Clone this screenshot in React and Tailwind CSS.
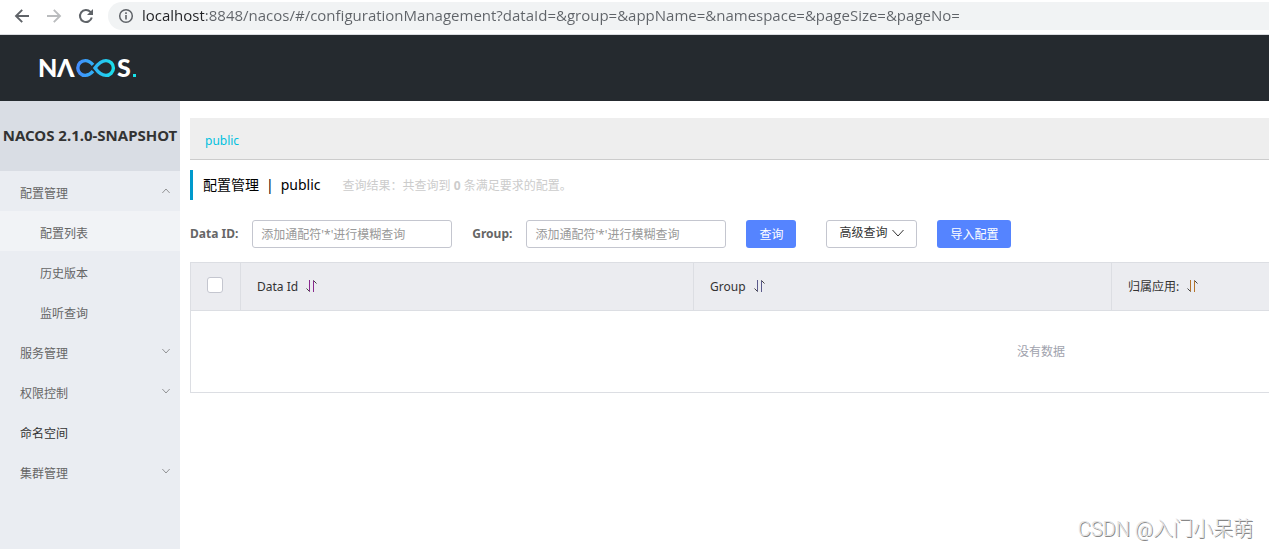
import React from 'react';

const URL_TEXT =
  'localhost:8848/nacos/#/configurationManagement?dataId=&group=&appName=&namespace=&pageSize=&pageNo=';

const menu = [
  { name: '配置管理', open: true, children: ['配置列表', '历史版本', '监听查询'] },
  { name: '服务管理', open: false, children: [] },
  { name: '权限控制', open: false, children: [] },
  { name: '命名空间' },
  { name: '集群管理', open: false, children: [] },
];

const Chevron = ({ up = false, className = '' }) => (
  <svg viewBox="0 0 12 8" fill="none" stroke="currentColor" className={className} aria-hidden="true">
    <path d={up ? 'M.5 7L6 1l5.5 6' : 'M.5 1L6 7l5.5-6'} />
  </svg>
);

const SortIcon = ({ className }) => (
  <svg width="11" height="14" viewBox="0 0 11 14" fill="none" stroke="currentColor" className={`mb-0.5 ${className}`} aria-hidden="true">
    <path d="M3.5 1v11.5" />
    <path d="M7.5 13V1.5" />
    <path d="M3.5 12.5l-3-3M7.5 1.5l3 3" stroke="#444" />
  </svg>
);

const BrowserBar = () => (
  <div className="flex h-[35px] items-start border-b border-[#dadce0] bg-white text-[#5f6368]">
    <div className="flex h-8 shrink-0 items-center gap-4 px-3.5">
      <button type="button" aria-label="Back">
        <svg width="16" height="16" viewBox="0 0 16 16" fill="none" stroke="currentColor" strokeWidth="1.9">
          <path d="M15 8H2.5M8.2 1.8L2 8l6.2 6.2" />
        </svg>
      </button>
      <button type="button" aria-label="Forward" className="text-[#babcbe]">
        <svg width="16" height="16" viewBox="0 0 16 16" fill="none" stroke="currentColor" strokeWidth="1.9">
          <path d="M1 8h12.5M7.8 1.8L14 8l-6.2 6.2" />
        </svg>
      </button>
      <button type="button" aria-label="Reload">
        <svg width="16" height="16" viewBox="0 0 16 16" fill="none" stroke="currentColor" strokeWidth="2">
          <path d="M13.8 9.6A6 6 0 1 1 12.4 3.9L14 5.6" />
          <path d="M15 1v6H9z" fill="currentColor" stroke="none" />
        </svg>
      </button>
    </div>
    <div className="mt-0.5 flex h-7 min-w-0 flex-1 items-center gap-2 rounded-l-full bg-[#f1f3f4] pl-2.5">
      <svg width="16" height="16" viewBox="0 0 16 16" fill="none" stroke="currentColor" className="shrink-0" aria-hidden="true">
        <circle cx="8" cy="8" r="6.3" strokeWidth="1.5" />
        <path d="M8 7v4.5M8 4.3v1.6" strokeWidth="1.6" />
      </svg>
      <input
        type="text"
        aria-label="Address"
        defaultValue={URL_TEXT}
        className="h-7 min-w-0 flex-1 bg-[linear-gradient(90deg,#202124_62px,#5f6368_62px)] bg-clip-text pb-0.5 font-['Open_Sans',sans-serif] text-[15px] text-transparent outline-none"
      />
    </div>
  </div>
);

const Logo = () => (
  <svg width="104" height="36" viewBox="-4 -6 104 36" role="img" aria-label="NACOS.">
    <defs>
      <linearGradient id="loop" x1="36" y1="0" x2="76" y2="0" gradientUnits="userSpaceOnUse">
        <stop offset="0" stopColor="#4589ff" />
        <stop offset="1" stopColor="#17e3ea" />
      </linearGradient>
    </defs>
    <g fill="#fff" fontFamily="Lato, sans-serif" fontWeight="900" fontSize="25">
      <text x="-2" y="21">N</text>
      <text x="17" y="21">Λ</text>
      <text x="77" y="21">S</text>
    </g>
    <path
      d="M53 15.2C50.5 18.2 48 19.4 45.2 19.4a7.4 7.4 0 0 1 0-14.8c2.8 0 5.3 1.2 7.8 4.2M55 12c4-5.5 6.8-7.4 11-7.4a7.4 7.4 0 0 1 0 14.8c-4.2 0-7-1.9-11-7.4z"
      fill="none"
      stroke="url(#loop)"
      strokeWidth="3.4"
    />
    <rect x="93" y="18" width="3" height="3" fill="#17e3ea" />
  </svg>
);

const Sidebar = () => (
  <nav className="w-[180px] shrink-0 bg-[#eaedf2] text-xs text-[#666]">
    <h1 className="flex h-[70px] items-center justify-center whitespace-nowrap bg-[#d9dde4] pb-0.5 text-[15px] font-bold text-[#333]">
      NACOS 2.1.0-SNAPSHOT
    </h1>
    <ul>
      {menu.map((item) => (
        <li key={item.name}>
          <a
            href="#"
            className={`flex h-10 items-center justify-between pl-5 pr-2.5 pt-1.5 ${item.children ? '' : 'text-[#333]'}`}
          >
            {item.name}
            {item.children && <Chevron up={item.open} className="mb-1.5 h-2 w-2 text-[#666]" />}
          </a>
          {item.open && (
            <ul>
              {item.children.map((child, i) => (
                <li key={child}>
                  <a href="#" className={`flex h-10 items-center pl-10 pt-1.5 ${i === 0 ? 'bg-[#f1f3f6]' : ''}`}>
                    {child}
                  </a>
                </li>
              ))}
            </ul>
          )}
        </li>
      ))}
    </ul>
  </nav>
);

const SearchField = ({ id, label }) => (
  <div className="mr-5 flex items-center gap-3.5">
    <label htmlFor={id} className="font-bold text-[#666]">
      {label}
    </label>
    <input
      id={id}
      type="text"
      placeholder="添加通配符'*'进行模糊查询"
      className="h-7 w-[200px] rounded-[3px] border border-[#c4c6cf] px-2 placeholder:text-[#999]"
    />
  </div>
);

const HeadCell = ({ title, iconClass, className = '' }) => (
  <th className={`border border-[#dcdee3] px-4 text-left font-normal ${className}`}>
    <button type="button" className="flex items-center gap-2">
      {title}
      <SortIcon className={iconClass} />
    </button>
  </th>
);

const ConfigTable = () => (
  <div className="mt-3.5 overflow-hidden">
    <table className="w-full min-w-[1702px] table-fixed border-collapse border border-[#dcdee3]">
      <thead>
        <tr className="h-12 bg-[#ebecf0] text-[#333]">
          <th className="w-[50px] border border-[#dcdee3] pb-1 pl-4">
            <input
              type="checkbox"
              aria-label="全选"
              className="block h-4 w-4 appearance-none rounded-[3px] border border-[#c4c6cf] bg-white"
            />
          </th>
          <HeadCell title="Data Id" iconClass="text-[#8a2a8f]" className="w-[453px]" />
          <HeadCell title="Group" iconClass="text-[#5b5b8c]" className="w-[418px]" />
          <HeadCell title="归属应用:" iconClass="text-[#b5742a]" />
        </tr>
      </thead>
      <tbody>
        <tr className="h-[82px]">
          <td colSpan={4} className="text-center text-[#a0a2ad]">
            没有数据
          </td>
        </tr>
      </tbody>
    </table>
  </div>
);

const Content = () => (
  <main className="min-w-0 flex-1 pl-2.5 pt-[17px] text-xs">
    <div className="flex h-[42px] items-center border-b border-[#ccc] bg-[#eee] px-[15px] pt-1">
      <a href="#" className="text-[#00c1de]">
        public
      </a>
    </div>
    <div className="mt-2.5 flex h-[30px] items-center border-l-[3px] border-[#09c] pl-2.5">
      <h2 className="flex gap-[7px] text-sm text-black">
        <span>配置管理</span>
        <span>|</span>
        <span>public</span>
      </h2>
      <p className="ml-[22px] pt-0.5 text-[#ccc]">
        查询结果：共查询到 <strong>0</strong> 条满足要求的配置。
      </p>
    </div>
    <form className="mt-5 flex items-center whitespace-nowrap">
      <SearchField id="dataId" label="Data ID:" />
      <SearchField id="group" label="Group:" />
      <button type="button" className="h-7 rounded-[3px] bg-[#5584ff] px-[13px] pt-0.5 text-white">
        查询
      </button>
      <button
        type="button"
        className="ml-[30px] flex h-7 items-center gap-[5px] rounded-[3px] border border-[#c4c6cf] px-3 pb-0.5 text-[#333]"
      >
        高级查询
        <Chevron className="h-2 w-3" />
      </button>
      <button type="button" className="ml-5 h-7 rounded-[3px] bg-[#5584ff] px-[13px] pt-0.5 text-white">
        导入配置
      </button>
    </form>
    <ConfigTable />
  </main>
);

const App = () => (
  <div className="relative flex min-h-screen flex-col bg-white font-['Noto_Sans','Noto_Sans_CJK_SC',sans-serif]">
    <BrowserBar />
    <header className="flex h-[66px] items-center bg-[#252a2f] px-9">
      <Logo />
    </header>
    <div className="flex flex-1">
      <Sidebar />
      <Content />
    </div>
    <p className="absolute bottom-1.5 right-4 font-['Roboto','Noto_Sans_CJK_SC',sans-serif] text-xl font-light text-[#e4e4e4] [text-shadow:1px_1px_0_#888]">
      CSDN @入门小呆萌
    </p>
  </div>
);

export default App;
